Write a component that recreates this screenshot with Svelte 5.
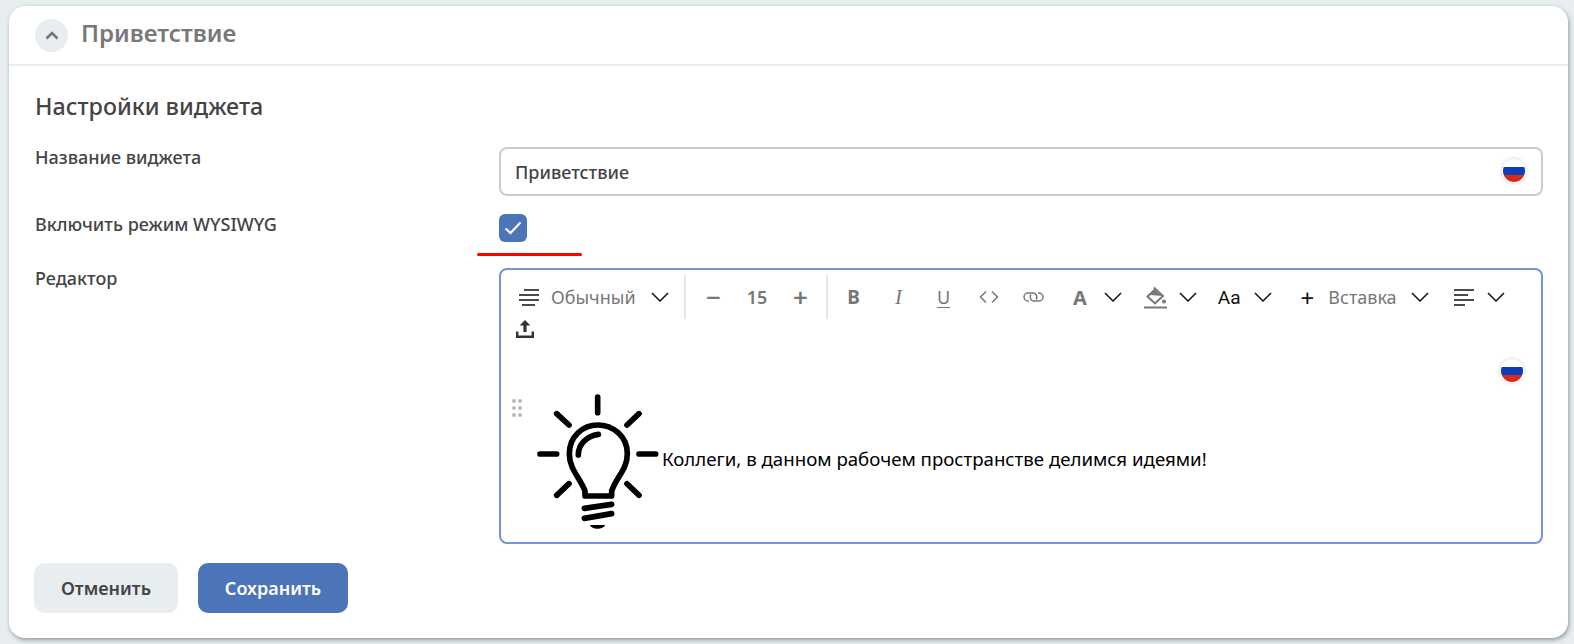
<script>
  let name = 'Приветствие'
  let wysiwyg = true
</script>

{#snippet chevron()}
  <svg class="chev" width="18" height="10" viewBox="0 0 18 10" fill="none" stroke="#111" stroke-width="1.5"><path d="M1 1l8 8 8-8" /></svg>
{/snippet}

{#snippet flag()}
  <span class="flag"><span class="stripes"></span></span>
{/snippet}

<div class="page">
  <section class="card">
    <header class="head">
      <button class="toggle" aria-label="Свернуть">
        <svg width="14" height="9" viewBox="0 0 14 9" fill="none" stroke="#6f7477" stroke-width="2.6"><path d="M1.5 7.5L7 2l5.500 5.500" /></svg>
      </button>
      <h2>Приветствие</h2>
    </header>

    <div class="body">
      <h3>Настройки виджета</h3>

      <div class="form">
        <span class="label">Название виджета</span>
        <div class="field">
          <input type="text" bind:value={name} />
          {@render flag()}
        </div>

        <span class="label">Включить режим WYSIWYG</span>
        <div class="check-row">
          <label class="check">
            <input type="checkbox" bind:checked={wysiwyg} />
            <svg width="18" height="14" viewBox="0 0 18 14" fill="none" stroke="#fff" stroke-width="2.2"><path d="M1.5 7.500L6.500 12 16.500 1.500" /></svg>
          </label>
          <span class="red-line"></span>
        </div>

        <span class="label">Редактор</span>
        <div class="editor">
          <div class="toolbar">
            <div class="group block">
              <span class="icon-slot">
                <svg width="20" height="18" viewBox="0 0 20 18" stroke="#111" stroke-width="1.6" fill="none"><path d="M5 2H20M0 7H20M0 12H20M3 17H16" /></svg>
              </span>
              <span class="drop-text">Обычный</span>
              {@render chevron()}
            </div>
            <span class="divider"></span>
            <div class="group size">
              <span class="sign">−</span>
              <span class="num">15</span>
              <span class="sign">+</span>
            </div>
            <span class="divider"></span>
            <div class="fmt bold">B</div>
            <div class="fmt italic">I</div>
            <div class="fmt under">U</div>
            <div class="fmt">
              <svg width="20" height="14" viewBox="0 0 20 14" fill="none" stroke="#777" stroke-width="1.5"><path d="M7 1.500L1.500 7 7 12.500M13 1.500L18.500 7 13 12.500" /></svg>
            </div>
            <div class="fmt">
              <svg width="21" height="10" viewBox="0 0 21 10" fill="none" stroke="#777" stroke-width="1.5"><path d="M6 9H5a4 4 0 0 1 0-8h5a4 4 0 0 1 3 6.500" /><path d="M15 1h1a4 4 0 0 1 0 8h-5a4 4 0 0 1-3-6.500" /></svg>
            </div>
            <div class="drop color">
              <span class="big-a">A</span>
              {@render chevron()}
            </div>
            <div class="drop bucket">
              <svg width="24" height="23" viewBox="0 0 24 23" fill="#777">
                <path d="M10 1.500L12 3.500 19 10l-8 7.500L3.500 10.500 11 3.500" fill="none" stroke="#777" stroke-width="2" />
                <path d="M6 9L11 4l7 6z" />
                <circle cx="20" cy="15.500" r="2" />
                <rect x="0" y="20.500" width="23" height="2" />
              </svg>
              {@render chevron()}
            </div>
            <div class="drop aa">
              <span class="aa-text">Aa</span>
              {@render chevron()}
            </div>
            <div class="drop insert">
              <span class="thin-plus">+</span>
              <span class="drop-text">Вставка</span>
              {@render chevron()}
            </div>
            <div class="drop align">
              <svg width="20" height="18" viewBox="0 0 20 18" stroke="#111" stroke-width="1.6" fill="none"><path d="M0 2H20M0 7H14M0 12H20M0 17H11" /></svg>
              {@render chevron()}
            </div>
            <div class="upload">
              <svg width="18" height="18" viewBox="0 0 18 18" fill="#333"><path d="M9 0l5.400 5.600H10.600V12H7.400V5.600H3.600zM0 11.500h2.400v4h13.200v-4H18V18H0z" /></svg>
            </div>
          </div>

          <div class="content">
            <span class="handle"><i></i><i></i><i></i><i></i><i></i><i></i></span>
            <span class="editor-flag">{@render flag()}</span>
            <p>
              <svg class="bulb" width="125" height="140" viewBox="135 30 375 420" fill="none" stroke="#000" stroke-width="17" stroke-linecap="round">
                <path d="M323 48V95M200 98L237 132M447 98L411 132M150 219H200M447 219H497M200 343L237 308M447 343L411 308" />
                <path d="M285 345V330C270 290 238 265 238 218C238 165 280 132 323 132C368 132 412 165 412 218C412 265 378 290 365 330V345Z" stroke-linejoin="round" />
                <path d="M265 222C265 190 290 165 325 160" />
                <path d="M283 382L365 370M283 412L365 398" />
                <path d="M300 432H345C340 447 305 447 300 432Z" fill="#000" stroke="none" />
              </svg>
              <span class="line">Коллеги, в данном рабочем пространстве делимся идеями!</span>
            </p>
          </div>
        </div>
      </div>

      <div class="actions">
        <button class="cancel">Отменить</button>
        <button class="save">Сохранить</button>
      </div>
    </div>
  </section>
</div>

<style>
  :global(body) {
    background: #e8edf0;
    font-family: 'Noto Sans', sans-serif;
  }

  .page {
    padding: 6px 6px 6px 9px;
    height: 644px;
    box-sizing: border-box;
  }

  .card {
    height: 632px;
    box-sizing: border-box;
    background: #fff;
    border-radius: 16px;
    box-shadow: 1px 2px 4px rgba(70, 90, 100, 0.55);
  }

  .head {
    display: flex;
    align-items: center;
    gap: 13px;
    height: 60px;
    box-sizing: border-box;
    padding: 0 26px;
    border-bottom: 2px solid #e8edf0;
  }

  .toggle {
    width: 33px;
    height: 33px;
    padding: 0;
    border: none;
    border-radius: 50%;
    background: #e8edf0;
    display: flex;
    align-items: center;
    justify-content: center;
  }

  h2 {
    margin: 0 0 6px;
    font-size: 24px;
    font-weight: 600;
    color: #77787a;
  }

  .body {
    padding: 0 25px;
  }

  h3 {
    margin: 0;
    padding: 23px 0 0 1px;
    height: 57px;
    box-sizing: border-box;
    font-size: 23.3px;
    line-height: 34px;
    font-weight: 500;
    color: #444;
  }

  .form {
    display: grid;
    grid-template-columns: 465px 1fr;
    row-gap: 18px;
    margin-top: 24px;
  }

  .label {
    margin-top: -1px;
    padding-left: 1px;
    font-size: 18px;
    font-weight: 500;
    line-height: 22px;
    color: #444;
  }

  .field {
    position: relative;
    height: 49px;
  }

  .field input {
    width: 100%;
    height: 100%;
    box-sizing: border-box;
    padding: 0 14px;
    border: 2px solid #ccc;
    border-radius: 8px;
    font: 500 18px 'Noto Sans', sans-serif;
    color: #444;
    outline: none;
  }

  .field .flag {
    position: absolute;
    top: 12px;
    right: 17px;
  }

  .flag {
    display: block;
    width: 24px;
    height: 24px;
    box-sizing: border-box;
    padding: 1px;
    border-radius: 50%;
    background: #fff;
    box-shadow: 0 0 4px rgba(0, 0, 0, 0.18);
  }

  .stripes {
    display: block;
    width: 22px;
    height: 22px;
    border-radius: 50%;
    background: linear-gradient(#fff 0 33%, #0b3fb8 33% 66%, #d9291c 66%);
  }

  .check-row {
    position: relative;
    height: 28px;
    margin-bottom: 8px;
  }

  .check {
    display: flex;
    align-items: center;
    justify-content: center;
    width: 28px;
    height: 28px;
    border-radius: 6px;
    background: #4c74b9;
  }

  .check input {
    position: absolute;
    opacity: 0;
    margin: 0;
  }

  .red-line {
    position: absolute;
    left: -22px;
    top: 39px;
    width: 105px;
    height: 3px;
    background: #f00;
    border-radius: 2px;
  }

  .editor {
    height: 276px;
    box-sizing: border-box;
    border: 2px solid #7396d0;
    border-radius: 8px;
    display: flex;
    flex-direction: column;
  }

  .toolbar {
    display: flex;
    flex-wrap: wrap;
    align-items: center;
    padding: 5px 0 0 18px;
    height: 70px;
    box-sizing: border-box;
    align-content: flex-start;
  }

  .group,
  .drop,
  .fmt {
    display: flex;
    align-items: center;
    height: 44px;
  }

  .icon-slot {
    display: flex;
    margin-right: 12px;
  }

  .drop-text {
    font-size: 18px;
    color: #777;
  }

  .chev {
    flex: none;
  }

  .block {
    width: 165px;
  }

  .block .chev {
    margin-left: 15px;
  }

  .divider {
    width: 2px;
    height: 44px;
    background: #e6e6e6;
  }

  .size {
    width: 140px;
    padding: 0 18px 0 20px;
    box-sizing: border-box;
    justify-content: space-between;
  }

  .divider + .size + .divider {
    margin-right: 3px;
  }

  .sign {
    font-size: 26px;
    font-weight: 600;
    color: #777;
    line-height: 1;
  }

  .num {
    font-size: 18px;
    font-weight: 600;
    color: #777;
  }

  .fmt {
    width: 45px;
    justify-content: center;
    color: #777;
    font-size: 18px;
  }

  .bold {
    font-weight: 700;
    font-size: 19px;
  }

  .italic {
    font-family: 'Liberation Serif', serif;
    font-style: italic;
    font-size: 21px;
  }

  .under {
    text-decoration: underline;
    text-underline-offset: 3px;
  }

  .big-a {
    font-size: 20px;
    font-weight: 700;
    color: #777;
  }

  .color {
    margin-left: 17px;
    gap: 17px;
  }

  .bucket {
    margin-left: 22px;
    gap: 11px;
  }

  .aa {
    margin-left: 21px;
    gap: 13px;
  }

  .aa-text {
    font-family: 'Roboto', sans-serif;
    font-size: 19px;
    color: #111;
  }

  .insert {
    margin-left: 29px;
  }

  .thin-plus {
    font-size: 24px;
    color: #111;
    margin-right: 14px;
  }

  .insert .chev {
    margin-left: 14px;
  }

  .align {
    margin-left: 25px;
    gap: 13px;
  }

  .upload {
    width: 100%;
    height: 18px;
    margin: 1px 0 0 -3px;
    display: flex;
  }

  .content {
    position: relative;
    flex: 1;
  }

  .handle {
    position: absolute;
    left: 11px;
    top: 59px;
    display: grid;
    grid-template-columns: 3px 3px;
    gap: 3px;
  }

  .handle i {
    width: 4px;
    height: 4px;
    border-radius: 50%;
    background: #bbb;
  }

  .editor-flag {
    position: absolute;
    top: 19px;
    right: 17px;
  }

  .content p {
    margin: 0;
    position: absolute;
    left: 34px;
    top: 51px;
    display: flex;
    align-items: center;
    gap: 2px;
    font-size: 18.67px;
    color: #000;
  }

  .line {
    margin-bottom: 6px;
  }

  .bulb {
    display: block;
  }

  .actions {
    display: flex;
    gap: 20px;
    margin-top: 19px;
  }

  .actions button {
    height: 50px;
    border: none;
    border-radius: 10px;
    font: 600 18px 'Noto Sans', sans-serif;
    padding: 0;
  }

  .cancel {
    width: 144px;
    background: #e8edf0;
    color: #444;
  }

  .save {
    width: 150px;
    background: #4c74b9;
    color: #fff;
  }
</style>
